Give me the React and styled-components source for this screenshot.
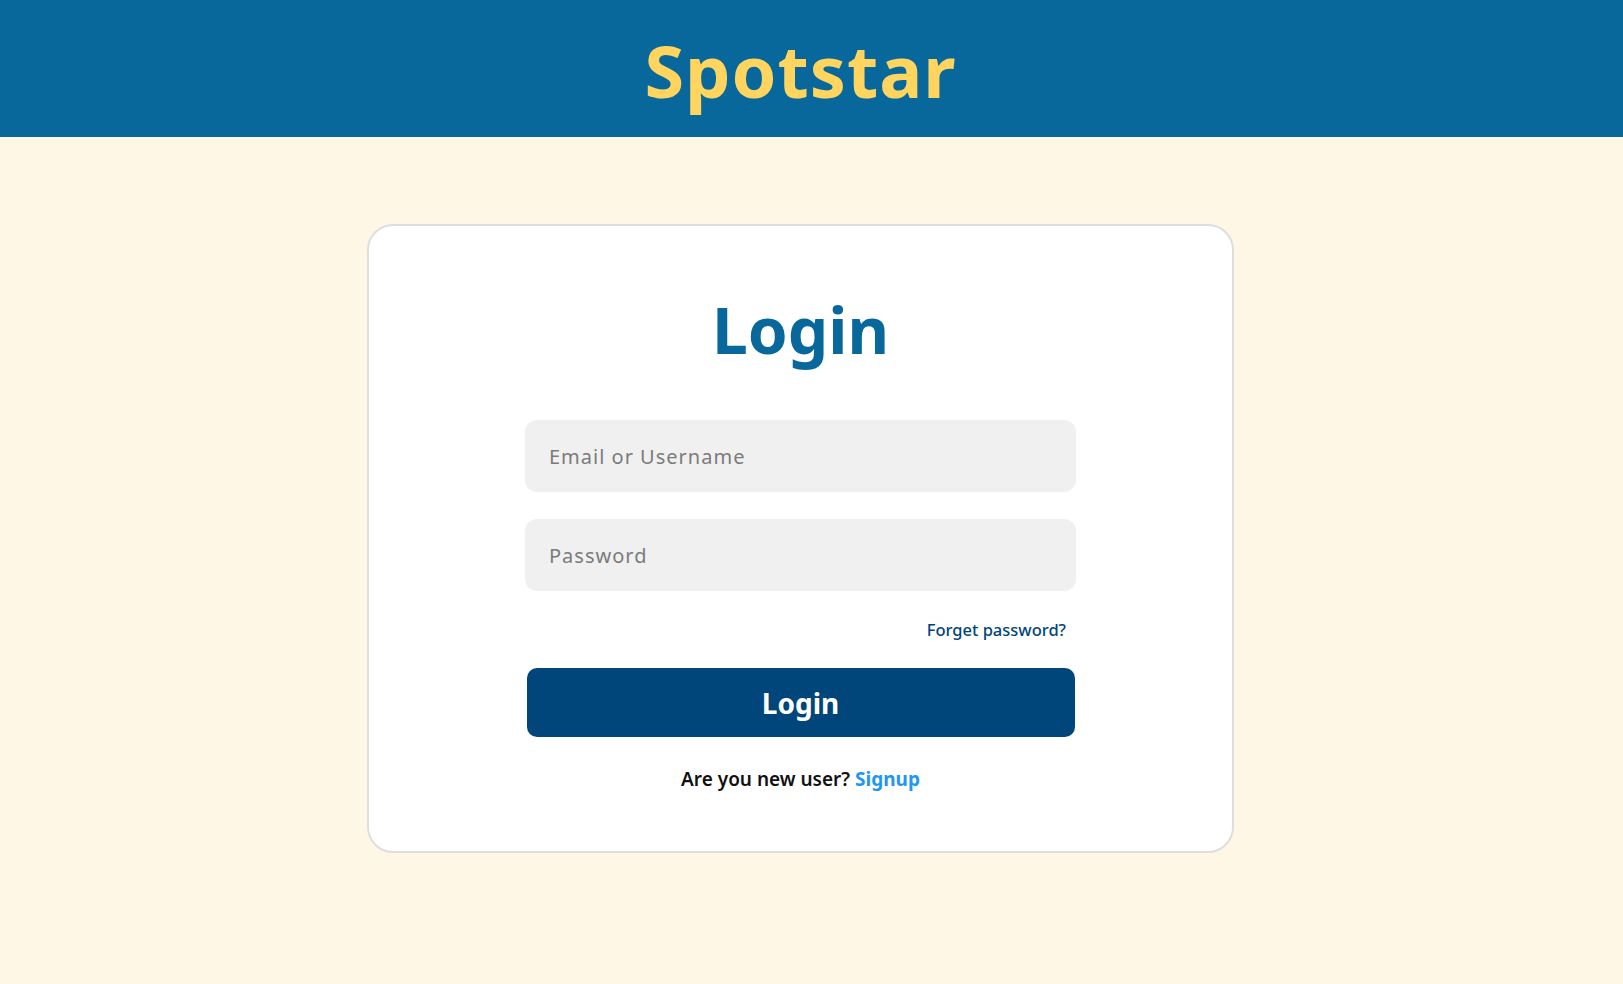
import React from "react";
import styled, { createGlobalStyle } from "styled-components";

const GlobalStyle = createGlobalStyle`
    * {
        box-sizing: border-box;
    }

    body {
        margin: 0;
        background: #fff7e6;
        font-family: "Noto Sans", "Open Sans", sans-serif;
    }
`;

// content is centred on a slightly narrower column than the window
const GUTTER = "22px";

const Page = styled.div`
    min-height: 100vh;
    background: #fff7e6;
`;

const Header = styled.header`
    height: 137px;
    background: #08689c;
    display: flex;
    justify-content: center;
    padding: 34px ${GUTTER} 0 0;
`;

const Brand = styled.h1`
    margin: 0;
    font-size: 72px;
    line-height: 72px;
    font-weight: 700;
    letter-spacing: 1px;
    color: #ffd55f;
`;

const Main = styled.main`
    display: flex;
    justify-content: center;
    padding: 87px ${GUTTER} 0 0;
`;

const Card = styled.section`
    width: 867px;
    background: #fff;
    border: 2px solid #dedede;
    border-radius: 26px;
    padding: 64px 0 58px;
    display: flex;
    flex-direction: column;
    align-items: center;
`;

const Title = styled.h2`
    margin: 0 0 50px;
    font-size: 64px;
    line-height: 80px;
    font-weight: 700;
    color: #08689c;
`;

const Form = styled.form`
    width: 551px;
    display: flex;
    flex-direction: column;
`;

const Input = styled.input`
    width: 100%;
    height: 72px;
    margin-bottom: 27px;
    padding: 0 24px;
    border: none;
    border-radius: 12px;
    background: #f0f0f0;
    font-family: inherit;
    font-size: 20px;
    letter-spacing: 1px;
    color: #333;
    outline: none;

    &::placeholder {
        color: #7b7b7b;
    }
`;

const Forgot = styled.a`
    align-self: flex-end;
    margin-right: 10px;
    font-size: 16.5px;
    line-height: 24px;
    font-weight: 500;
    color: #00457a;
    text-decoration: none;
    cursor: pointer;
`;

const Button = styled.button`
    width: 548px;
    height: 69px;
    margin: 26px auto 28px;
    border: none;
    border-radius: 10px;
    background: #00467a;
    color: #fff;
    font-family: inherit;
    font-size: 28px;
    font-weight: 700;
    cursor: pointer;
`;

const Footer = styled.p`
    margin: 0;
    font-size: 19px;
    line-height: 28px;
    font-weight: 600;
    color: #111;
    text-align: center;

    a {
        color: #2196f3;
        font-weight: 700;
        text-decoration: none;
    }
`;

const App = () => {
    return (
        <Page>
            <GlobalStyle />
            <Header>
                <Brand>Spotstar</Brand>
            </Header>
            <Main>
                <Card>
                    <Title>Login</Title>
                    <Form onSubmit={(e) => e.preventDefault()}>
                        <Input type="text" placeholder="Email or Username" />
                        <Input type="password" placeholder="Password" />
                        <Forgot>Forget password?</Forgot>
                        <Button type="submit">Login</Button>
                        <Footer>
                            Are you new user? <a href="#signup">Signup</a>
                        </Footer>
                    </Form>
                </Card>
            </Main>
        </Page>
    );
};

export default App;
